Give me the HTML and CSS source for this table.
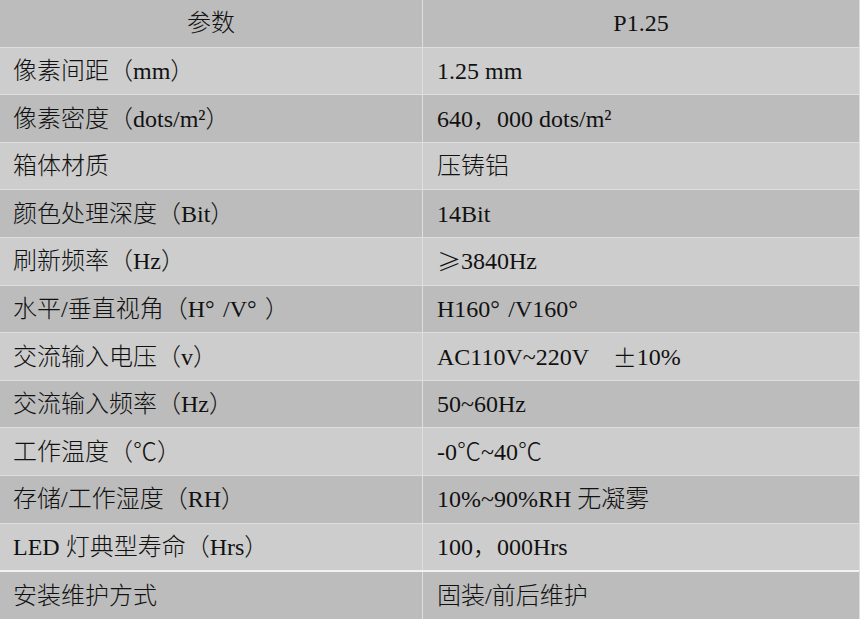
FILE: index.html
```html
<!DOCTYPE html>
<html lang="zh-CN">
<head>
<meta charset="utf-8">
<title>参数</title>
<link rel="stylesheet" href="styles.css">
</head>
<body>
<div class="spec">
  <div class="row head dark"><div class="k">参数</div><div class="v">P1.25</div></div>
  <div class="row light"><div class="k">像素间距（mm）</div><div class="v">1.25 mm</div></div>
  <div class="row dark"><div class="k">像素密度（dots/m²）</div><div class="v">640，000 dots/m²</div></div>
  <div class="row light"><div class="k">箱体材质</div><div class="v">压铸铝</div></div>
  <div class="row dark"><div class="k">颜色处理深度（Bit）</div><div class="v">14Bit</div></div>
  <div class="row light"><div class="k">刷新频率（Hz）</div><div class="v"><span class="cjk">≥</span>3840Hz</div></div>
  <div class="row dark"><div class="k">水平/垂直视角（H<span class="deg">°</span>/V<span class="deg">°</span>）</div><div class="v">H160<span class="deg">°</span>/V160<span class="deg">°</span></div></div>
  <div class="row light"><div class="k">交流输入电压（v）</div><div class="v">AC110V~220V　<span class="cjk">±</span>10%</div></div>
  <div class="row dark"><div class="k">交流输入频率（Hz）</div><div class="v">50~60Hz</div></div>
  <div class="row light"><div class="k">工作温度（℃）</div><div class="v">-0℃~40℃</div></div>
  <div class="row dark"><div class="k">存储/工作湿度（RH）</div><div class="v">10%~90%RH 无凝雾</div></div>
  <div class="row light"><div class="k">LED 灯典型寿命（Hrs）</div><div class="v">100，000Hrs</div></div>
  <div class="row dark last"><div class="k">安装维护方式</div><div class="v">固装/前后维护</div></div>
</div>
</body>
</html>
```
FILE: styles.css
```css
html, body {
  margin: 0;
  padding: 0;
  background: #bcbcbc;
}
.spec {
  width: 860px;
  height: 619px;
  display: flex;
  flex-direction: column;
  box-sizing: border-box;
  border-right: 1px solid #dedede;
  font-family: "Liberation Serif", "Noto Sans CJK SC", serif;
  font-size: 24px;
  font-weight: 300;
  color: #111;
  overflow: hidden;
}
.row {
  flex: 1 1 0;
  display: flex;
  align-items: stretch;
  border-top: 1px solid #dedede;
  min-height: 0;
}
.row.head {
  border-top: none;
}
.row.last {
  border-top: 2px solid #f2f2f2;
}
.dark {
  background: #bcbcbc;
}
.light {
  background: #cdcdcd;
}
.k, .v {
  display: flex;
  align-items: center;
  white-space: pre;
  line-height: 1;
}
.k {
  width: 423px;
  flex: 0 0 423px;
  border-right: 1px solid #dedede;
  padding-left: 13px;
  box-sizing: border-box;
}
.v {
  flex: 1 1 auto;
  padding-left: 14px;
}
.head .k, .head .v {
  justify-content: center;
  padding-left: 0;
}
.cjk {
  font-family: "Noto Sans CJK SC", sans-serif;
}
.deg {
  display: inline-block;
  width: 0.75em;
  text-align: left;
}
```
